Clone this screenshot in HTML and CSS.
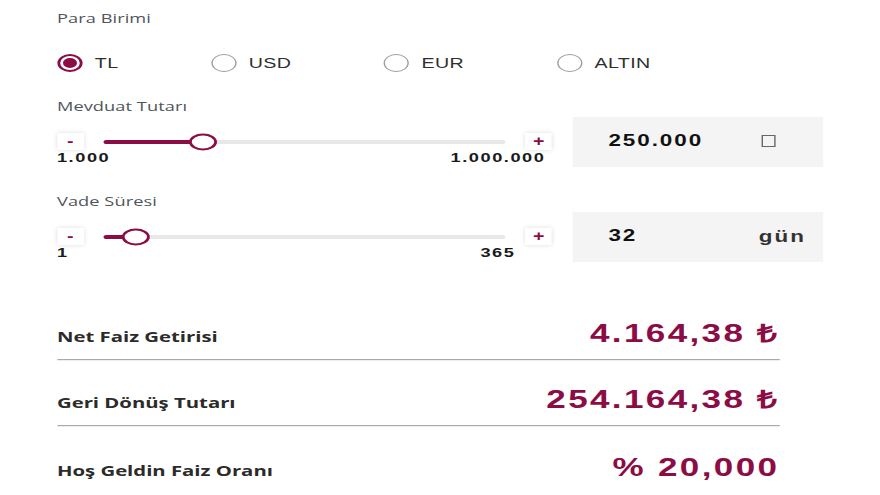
FILE: index.html
```html
<!DOCTYPE html>
<html lang="tr">
<head>
<meta charset="utf-8">
<title>Mevduat Hesaplama</title>
<link rel="stylesheet" href="styles.css">
</head>
<body>
<div class="page">
  <div class="label">Para Birimi</div>
  <div class="radios">
    <label class="radio checked"><span class="circle"></span><span class="radio-text">TL</span></label>
    <label class="radio"><span class="circle"></span><span class="radio-text">USD</span></label>
    <label class="radio"><span class="circle"></span><span class="radio-text">EUR</span></label>
    <label class="radio"><span class="circle"></span><span class="radio-text">ALTIN</span></label>
  </div>

  <div class="label section-label">Mevduat Tutarı</div>
  <div class="slider-row">
    <div class="slider-col">
      <div class="track-line">
        <span class="step">-</span>
        <div class="track">
          <div class="fill" style="width:24.9%"></div>
          <span class="thumb" style="left:24.9%"></span>
        </div>
        <span class="step">+</span>
      </div>
      <div class="range-labels">
        <span>1.000</span>
        <span class="max"><span>1.000.000</span></span>
      </div>
    </div>
    <div class="amount">
      <span class="amount-value">250.000</span>
      <span class="unit-box"></span>
    </div>
  </div>

  <div class="label section-label">Vade Süresi</div>
  <div class="slider-row">
    <div class="slider-col">
      <div class="track-line">
        <span class="step">-</span>
        <div class="track">
          <div class="fill" style="width:8.2%"></div>
          <span class="thumb" style="left:8.2%"></span>
        </div>
        <span class="step">+</span>
      </div>
      <div class="range-labels">
        <span>1</span>
        <span class="max"><span>365</span></span>
      </div>
    </div>
    <div class="amount">
      <span class="amount-value">32</span>
      <span class="unit-text">gün</span>
    </div>
  </div>

  <div class="results">
    <div class="result-row">
      <span class="result-label">Net Faiz Getirisi</span>
      <span class="result-value">4.164,38 ₺</span>
    </div>
    <div class="result-row">
      <span class="result-label">Geri Dönüş Tutarı</span>
      <span class="result-value">254.164,38 ₺</span>
    </div>
    <div class="result-row last">
      <span class="result-label">Hoş Geldin Faiz Oranı</span>
      <span class="result-value">% 20,000</span>
    </div>
  </div>
</div>
</body>
</html>
```
FILE: styles.css
```css
html, body {
  margin: 0;
  padding: 0;
  background: #ffffff;
}

body {
  font-family: "Liberation Sans", Arial, sans-serif;
  overflow: hidden;
}

.page {
  width: 629px;
  box-sizing: border-box;
  padding: 9px 0 0 40.7px;
  transform: scaleX(1.4);
  transform-origin: 0 0;
}

.label {
  font-family: "Open Sans", sans-serif;
  font-size: 13px;
  line-height: 18px;
  color: #50555b;
  letter-spacing: 0.05px;
}

.section-label {
  margin-top: 25px;
}

.radios {
  display: flex;
  align-items: center;
  gap: 66px;
  margin-top: 27px;
  height: 18px;
}

.radio {
  display: flex;
  align-items: center;
  gap: 9px;
}

.circle {
  width: 18px;
  height: 18px;
  box-sizing: border-box;
  border: 1px solid #9c9c9c;
  border-radius: 50%;
  background: #fff;
  display: flex;
  align-items: center;
  justify-content: center;
}

.radio.checked .circle {
  border: 2px solid #8c0d46;
}

.radio.checked .circle::after {
  content: "";
  width: 10px;
  height: 10px;
  border-radius: 50%;
  background: #8c0d46;
}

.radio-text {
  font-size: 14px;
  line-height: 18px;
  color: #2f2f2f;
  letter-spacing: 0.3px;
}

.slider-row {
  display: flex;
  align-items: flex-start;
  gap: 14.3px;
  margin-top: 2px;
}

.slider-col {
  width: 353.6px;
  padding-top: 16px;
}

.track-line {
  display: flex;
  align-items: center;
  height: 17px;
}

.step {
  width: 19px;
  height: 17px;
  background: #fff;
  box-shadow: 0 0 4px rgba(0, 0, 0, 0.13);
  color: #8c0d46;
  font-size: 14px;
  font-weight: 700;
  line-height: 17px;
  text-align: center;
}

.track {
  flex: 1;
  height: 4px;
  margin: 0 14px;
  background: #e8e8e8;
  border-radius: 2px;
  position: relative;
}

.fill {
  height: 100%;
  background: #8c0d46;
  border-radius: 2px;
}

.thumb {
  position: absolute;
  top: 50%;
  width: 20px;
  height: 17px;
  box-sizing: border-box;
  border: 2px solid #8c0d46;
  border-radius: 50%;
  background: #fff;
  transform: translate(-50%, -50%);
}

.range-labels {
  display: flex;
  justify-content: space-between;
  width: 315px;
  margin-top: 1px;
  font-size: 13px;
  font-weight: 700;
  line-height: 14px;
  color: #1a1a1a;
  letter-spacing: 1.1px;
}

.max {
  width: 0;
  display: flex;
  justify-content: center;
  white-space: nowrap;
}

.amount {
  width: 179px;
  height: 50px;
  box-sizing: border-box;
  padding: 0 12px 0 26px;
  background: #f4f4f4;
  display: flex;
  align-items: center;
}

.amount-value {
  flex: 1;
  font-size: 16px;
  font-weight: 700;
  letter-spacing: 1.4px;
  color: #111;
  margin-top: -2px;
}

.unit-box {
  width: 8px;
  height: 10px;
  border: 1px solid #666;
  margin-right: 22px;
  margin-top: -2px;
}

.unit-text {
  font-size: 16px;
  font-weight: 700;
  letter-spacing: 1.4px;
  color: #333;
}

.results {
  width: 516px;
  margin-top: 32px;
}

.result-row {
  display: flex;
  justify-content: space-between;
  align-items: baseline;
  padding: 25px 0 12px;
  border-bottom: 1px solid #aaaaaa;
  box-shadow: 0 1px 0 #eeeeee;
}

.result-row.last {
  border-bottom: none;
  box-shadow: none;
  padding-top: 27px;
}

.result-label {
  font-family: "Open Sans", sans-serif;
  font-size: 14.5px;
  font-weight: 700;
  color: #2b2b2b;
}

.result-value {
  font-size: 25px;
  line-height: 28px;
  font-weight: 700;
  letter-spacing: 1.7px;
  color: #8c0d46;
}
```
